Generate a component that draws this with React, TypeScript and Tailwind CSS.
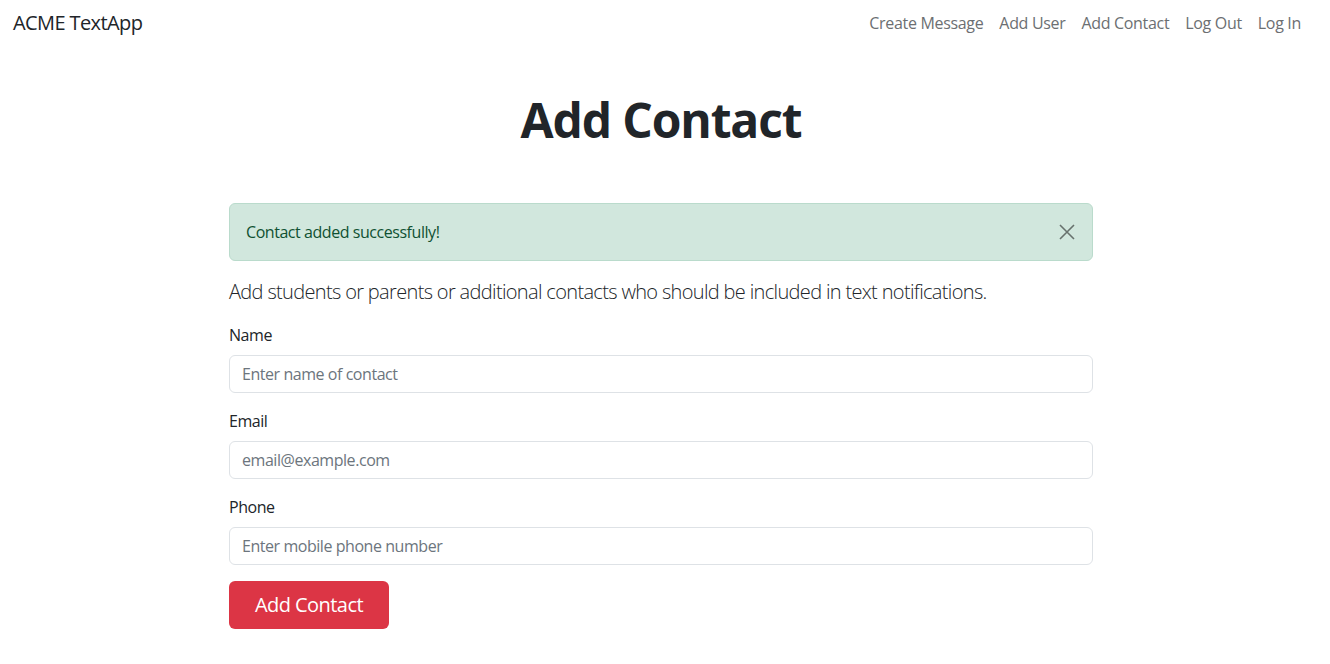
import { useState } from "react";

const font = { fontFamily: '"Open Sans", "Noto Sans", sans-serif' };

function NavBar() {
  const links = ["Create Message", "Add User", "Add Contact", "Log Out", "Log In"];
  return (
    <nav className="flex items-center justify-between h-[46px] pl-[13px] pr-[21px]">
      <a className="text-[20px] text-[#212529] leading-[30px] tracking-[-0.03em]">ACME TextApp</a>
      <ul className="flex items-center">
        {links.map((l) => (
          <li key={l}>
            <a className="block px-2 text-[16px] leading-6 text-[#6c6f72] tracking-[-0.02em]">{l}</a>
          </li>
        ))}
      </ul>
    </nav>
  );
}

export default function App() {
  const [showAlert, setShowAlert] = useState(true);

  return (
    <div className="min-h-screen bg-white text-[#212529] tracking-[-0.028em]" style={font}>
      <NavBar />

      <div className="ml-[229px] w-[864px]">
        <h1 className="mt-[45px] mb-[54px] text-center text-[48px] font-bold leading-[58px] tracking-[-0.024em]">
          Add Contact
        </h1>

        {showAlert && (
          <div className="flex items-center justify-between h-[58px] mb-4 pl-4 pr-[17px] rounded-md border border-[#badbcc] bg-[#d1e7dd] text-[#0f5132]">
            <span className="text-[16px]">Contact added successfully!</span>
            <button onClick={() => setShowAlert(false)} className="opacity-50 text-black">
              <svg width="16" height="16" viewBox="0 0 16 16" fill="none" stroke="currentColor" strokeWidth="1.6">
                <path d="M1 1l14 14M15 1L1 15" />
              </svg>
            </button>
          </div>
        )}

        <p className="mb-4 text-[20px] font-light leading-[30px] tracking-[-0.033em]">
          Add students or parents or additional contacts who should be included in text notifications.
        </p>

        <form className="flex flex-col" onSubmit={(e) => e.preventDefault()}>
          <label className="mb-2 text-[16px] leading-6">Name</label>
          <input
            className="mb-4 h-[38px] w-full rounded-md border border-[#dee2e6] px-3 text-[16px] tracking-[-0.028em] placeholder:text-[#6c757d] outline-none"
            placeholder="Enter name of contact"
          />
          <label className="mb-2 text-[16px] leading-6">Email</label>
          <input
            className="mb-4 h-[38px] w-full rounded-md border border-[#dee2e6] px-3 text-[16px] tracking-[-0.028em] placeholder:text-[#6c757d] outline-none"
            placeholder="email@example.com"
          />
          <label className="mb-2 text-[16px] leading-6">Phone</label>
          <input
            className="mb-4 h-[38px] w-full rounded-md border border-[#dee2e6] px-3 text-[16px] tracking-[-0.028em] placeholder:text-[#6c757d] outline-none"
            placeholder="Enter mobile phone number"
          />
          <button
            type="submit"
            className="h-12 w-[160px] rounded-md bg-[#dc3545] text-[20px] text-white tracking-[-0.028em]"
          >
            Add Contact
          </button>
        </form>
      </div>
    </div>
  );
}
